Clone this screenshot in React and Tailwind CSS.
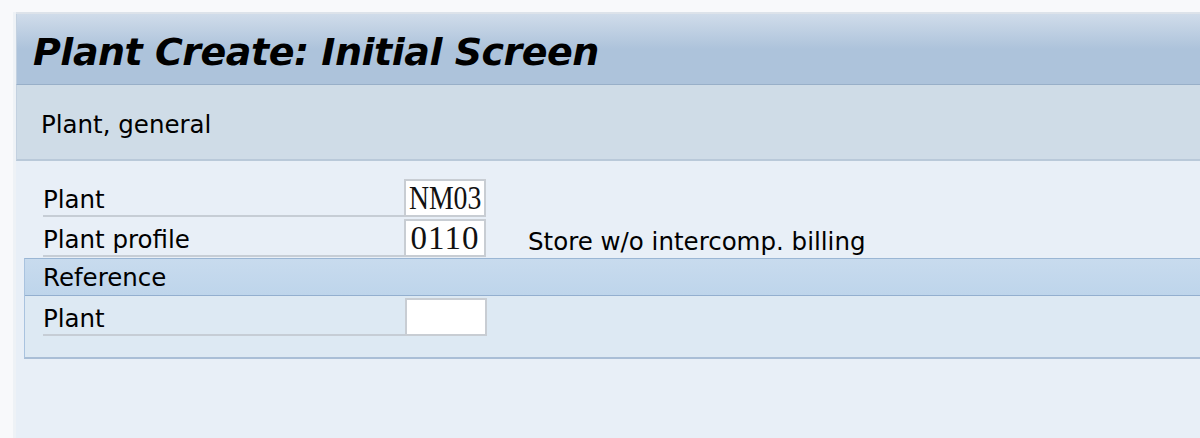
export default function App() {
  const rows = [
    { label: 'Plant', value: 'NM03', fit: 'scale-x-[0.84]' },
    { label: 'Plant profile', value: '0110', fit: 'tracking-[1px]', text: 'Store w/o intercomp. billing' },
  ];

  return (
    <div className="w-[1200px] h-[438px] overflow-hidden bg-[#f8f9fb] text-black" style={{ fontFamily: 'Tahoma, "DejaVu Sans", Verdana, sans-serif' }}>
      <div className="h-[12px]" />
      <div className="flex h-[426px]">
        <div className="w-[13px] shrink-0" />
        <div className="w-[3px] shrink-0 bg-[#eef2f6]" />
        <div className="flex-1 flex flex-col border-t-2 border-[#dde3ea] bg-[#e8eff7]">
          {/* Title */}
          <div className="h-[71px] flex items-center pl-[16px] border-l border-[#c3d1e0] border-b border-b-[#98afc8] bg-gradient-to-b from-[#d0dcea] via-[#adc3db] to-[#adc3db]">
            <h1 className="text-[38px] font-bold italic leading-none tracking-[-0.5px] pt-[5px]" style={{ fontFamily: 'Verdana, "DejaVu Sans", sans-serif' }}>
              Plant Create: Initial Screen
            </h1>
          </div>
          {/* Sub header */}
          <div className="h-[76px] flex items-center pl-[24px] border-l border-[#c3d1e0] border-b-2 border-b-[#b9c9d9] bg-[#cfdce7]">
            <span className="text-[24.5px] leading-none pt-[7px]">Plant, general</span>
          </div>

          {/* Fields */}
          <div className="pt-[17px] pl-[27px]">
            {rows.map(r => (
              <div key={r.label} className="flex items-end h-[39px] mb-[1px]">
                <div className="w-[361px] h-[38px] flex items-end border-b-2 border-[#c6cdd5]">
                  <span className="text-[24.5px] leading-none pb-[3px]">{r.label}</span>
                </div>
                <div className="w-[82px] h-[38px] bg-white border-2 border-[#c8cdd3] flex items-center justify-center">
                  <span className={`inline-block text-[33px] leading-none text-[#111] ${r.fit}`} style={{ fontFamily: '"Liberation Serif", serif' }}>{r.value}</span>
                </div>
                {r.text && (
                  <span className="ml-[42px] text-[24.5px] leading-none pb-[3px]">{r.text}</span>
                )}
              </div>
            ))}
          </div>

          {/* Reference group */}
          <div className="ml-[8px] h-[101px] border-l border-[#a9c3df] border-t border-t-[#9ab6d4] border-b-2 border-b-[#a9bed6] bg-[#dde9f3]">
            <div className="h-[37px] flex items-center pl-[18px] border-b border-[#93afcf] bg-gradient-to-b from-[#c8dbee] to-[#bed5eb]">
              <span className="text-[24.5px] leading-none pt-[3px]">Reference</span>
            </div>
            <div className="flex items-end h-[40px] pl-[18px]">
              <div className="w-[362px] h-[38px] flex items-end border-b-2 border-[#c6cdd5]">
                <span className="text-[24.5px] leading-none pb-[3px]">Plant</span>
              </div>
              <div className="w-[82px] h-[38px] bg-white border-2 border-[#c8cdd3]" />
            </div>
          </div>
        </div>
      </div>
    </div>
  );
}
